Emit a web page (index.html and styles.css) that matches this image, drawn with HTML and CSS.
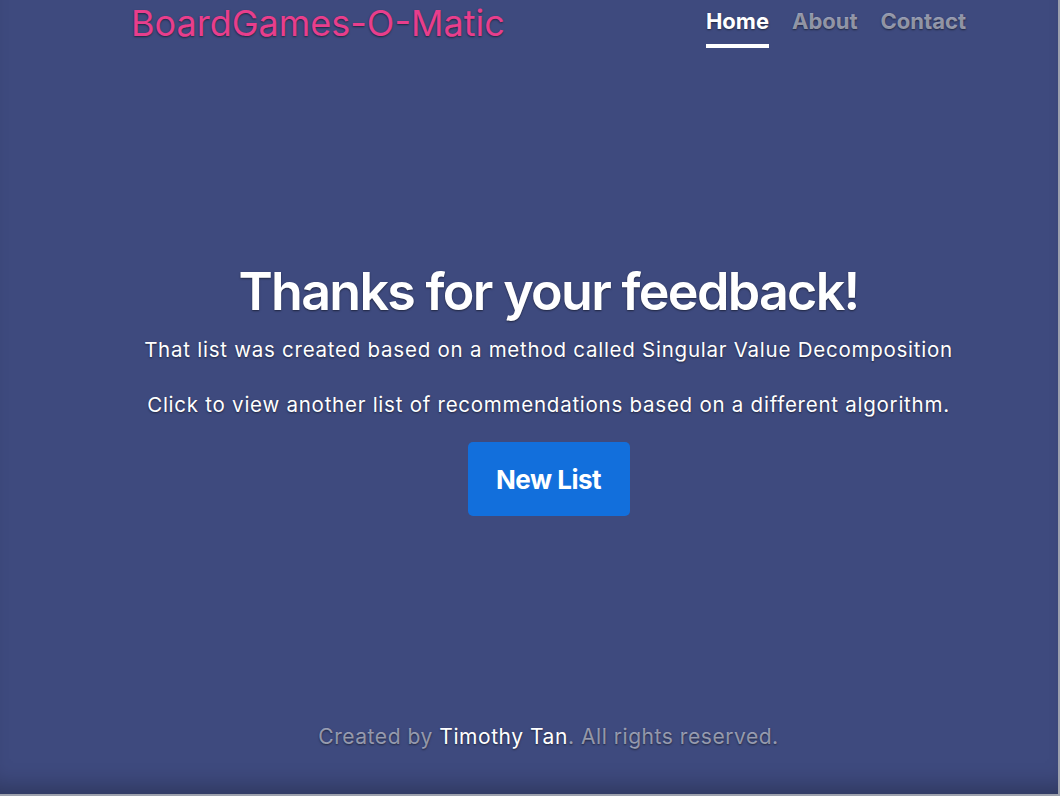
FILE: index.html
```html
<!DOCTYPE html>
<html lang="en">
<head>
<meta charset="utf-8">
<title>BoardGames-O-Matic</title>
<link rel="stylesheet" href="styles.css">
</head>
<body>
<div class="page">
  <div class="cover">
    <header class="masthead">
      <h3 class="brand">BoardGames-O-Matic</h3>
      <nav class="nav">
        <a class="nav-link active" href="#">Home</a>
        <a class="nav-link" href="#">About</a>
        <a class="nav-link" href="#">Contact</a>
      </nav>
    </header>
    <main class="inner">
      <h1 class="title">Thanks for your feedback!</h1>
      <p class="lead">That list was created based on a method called Singular Value Decomposition</p>
      <p class="lead">Click to view another list of recommendations based on a different algorithm.</p>
      <a class="btn" href="#">New List</a>
    </main>
    <footer class="footer">
      <p>Created by <a href="#">Timothy Tan</a>. All rights reserved.</p>
    </footer>
  </div>
</div>
</body>
</html>
```
FILE: styles.css
```css
html, body {
  margin: 0;
  padding: 0;
  background: #9ea2ae;
}
body {
  font-family: Inter, "Noto Sans", sans-serif;
  color: #fff;
  text-shadow: 0 1px 2px rgba(0,0,0,.5);
}
.page {
  width: 1058px;
  height: 794px;
  background: #3e4a7e;
  box-shadow: inset 0 -22px 22px -14px rgba(0,0,0,.25);
  overflow: hidden;
}
.cover {
  width: 835px;
  height: 794px;
  margin-left: 131px;
  display: flex;
  flex-direction: column;
}
.masthead {
  display: flex;
  justify-content: space-between;
  align-items: flex-start;
  height: 60px;
}
.brand {
  margin: 2px 0 0;
  font-size: 36px;
  font-weight: 400;
  color: #e83e8c;
  letter-spacing: 0;
  line-height: 42px;
}
.nav {
  display: flex;
  gap: 23px;
  padding-top: 7px;
}
.nav-link {
  font-size: 22px;
  font-weight: 700;
  color: rgba(255,255,255,.5);
  text-decoration: none;
  line-height: 28px;
  padding-bottom: 9px;
  border-bottom: 4px solid transparent;
}
.nav-link.active {
  color: #fff;
  border-bottom-color: #fff;
}
.inner {
  flex: 1;
  display: flex;
  flex-direction: column;
  align-items: center;
  padding-top: 200px;
}
.title {
  margin: 0;
  font-size: 52px;
  font-weight: 600;
  letter-spacing: -1.7px;
  line-height: 64px;
}
.lead {
  margin: 11px 0 19px;
  font-size: 20.5px;
  letter-spacing: 0.75px;
  line-height: 30px;
}
.lead + .lead { margin-top: 6px; }
.btn {
  margin-top: 3px;
  width: 162px;
  height: 74px;
  box-sizing: border-box;
  display: flex;
  align-items: center;
  justify-content: center;
  background: #126fdc;
  border-radius: 5px;
  color: #fff;
  font-size: 26px;
  font-weight: 700;
  letter-spacing: -0.5px;
  text-decoration: none;
  text-shadow: none;
}
.footer {
  text-align: center;
  color: rgba(255,255,255,.5);
  font-size: 21px;
  letter-spacing: 0.55px;
  padding-bottom: 42px;
}
.footer p { margin: 0; line-height: 30px; }
.footer a { color: #fff; text-decoration: none; }
```
